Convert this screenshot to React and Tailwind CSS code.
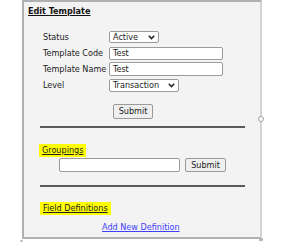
import React from "react";

function Chevron() {
  return (
    <svg width="7" height="5" viewBox="0 0 7 5" className="shrink-0">
      <path d="M0.8 0.8 L3.5 3.6 L6.2 0.8" fill="none" stroke="#222" strokeWidth="1.5" />
    </svg>
  );
}

export default function App() {
  return (
    <div className="w-[294px] h-[250px] bg-white relative font-['DejaVu_Sans_Condensed','DejaVu_Sans',sans-serif] text-[#222]">
      <div className="ml-[22px] w-[240px] h-[239px] border-2 border-[#b0b0b0] border-r-[#d2d2d2] bg-[#f3f3f3] flex flex-col">
        <div className="pl-[4px] pt-[4px] text-[9px] leading-[11px] font-bold underline text-[#111]">Edit Template</div>

        <div className="mt-[12px] pl-[19px] grid grid-cols-[66px_auto] text-[9px] leading-[11px]">
          <div className="h-[16px] flex items-center">Status</div>
          <div className="h-[16px] flex items-center">
            <div className="w-[50px] h-[12px] border border-[#9a9a9a] rounded-[2px] bg-white flex items-center justify-between pl-[3px] pr-[3px]">
              <span>Active</span>
              <Chevron />
            </div>
          </div>
          <div className="h-[16px] flex items-center">Template Code</div>
          <div className="h-[16px] flex items-center">
            <div className="w-[114px] h-[13px] border border-[#9a9a9a] rounded-[2px] bg-white flex items-center pl-[3px]">Test</div>
          </div>
          <div className="h-[16px] flex items-center">Template Name</div>
          <div className="h-[16px] flex items-center">
            <div className="w-[114px] h-[14px] border border-[#9a9a9a] rounded-[2px] bg-white flex items-center pl-[3px]">Test</div>
          </div>
          <div className="h-[16px] flex items-center">Level</div>
          <div className="h-[16px] flex items-center">
            <div className="w-[70px] h-[13px] border border-[#9a9a9a] rounded-[2px] bg-white flex items-center justify-between pl-[3px] pr-[3px]">
              <span>Transaction</span>
              <Chevron />
            </div>
          </div>
        </div>

        <div className="mt-[11px] ml-[89px] w-[40px] h-[15px] border border-[#9a9a9a] rounded-[2px] bg-[#efefef] text-[9px] leading-[11px] flex items-center justify-center">Submit</div>

        <div className="mt-[7px] ml-[16px] w-[205px] h-[2px] bg-[#5a5a5a]" />

        <div className="mt-[16px] ml-[15px] self-start h-[13px] px-[3px] bg-[#ffff00] text-[9px] leading-[11px] underline flex items-center">Groupings</div>

        <div className="mt-[1px] ml-[35px] flex items-center gap-[5px]">
          <div className="w-[121px] h-[14px] border border-[#9a9a9a] rounded-[2px] bg-white" />
          <div className="w-[41px] h-[14px] border border-[#9a9a9a] rounded-[2px] bg-[#efefef] text-[9px] leading-[11px] flex items-center justify-center">Submit</div>
        </div>

        <div className="mt-[13px] ml-[16px] w-[205px] h-[2px] bg-[#5a5a5a]" />

        <div className="mt-[15px] ml-[16px] self-start h-[13px] px-[3px] bg-[#ffff00] text-[9px] leading-[11px] underline flex items-center">Field Definitions</div>

        <div className="mt-[7px] ml-[78px] text-[9px] leading-[11px] underline text-[#4040ff]">Add New Definition</div>
      </div>

      <div className="absolute left-[258px] top-[116px] w-[6px] h-[6px] rounded-full border border-[#a0a0a0] bg-white" />
      <div className="absolute left-[259px] top-[238px] w-[4px] h-[3px] bg-[#b8b8b8]" />
      <div className="absolute left-[20px] top-[240px] w-[3px] h-[2px] bg-[#c8c8c8]" />
    </div>
  );
}
